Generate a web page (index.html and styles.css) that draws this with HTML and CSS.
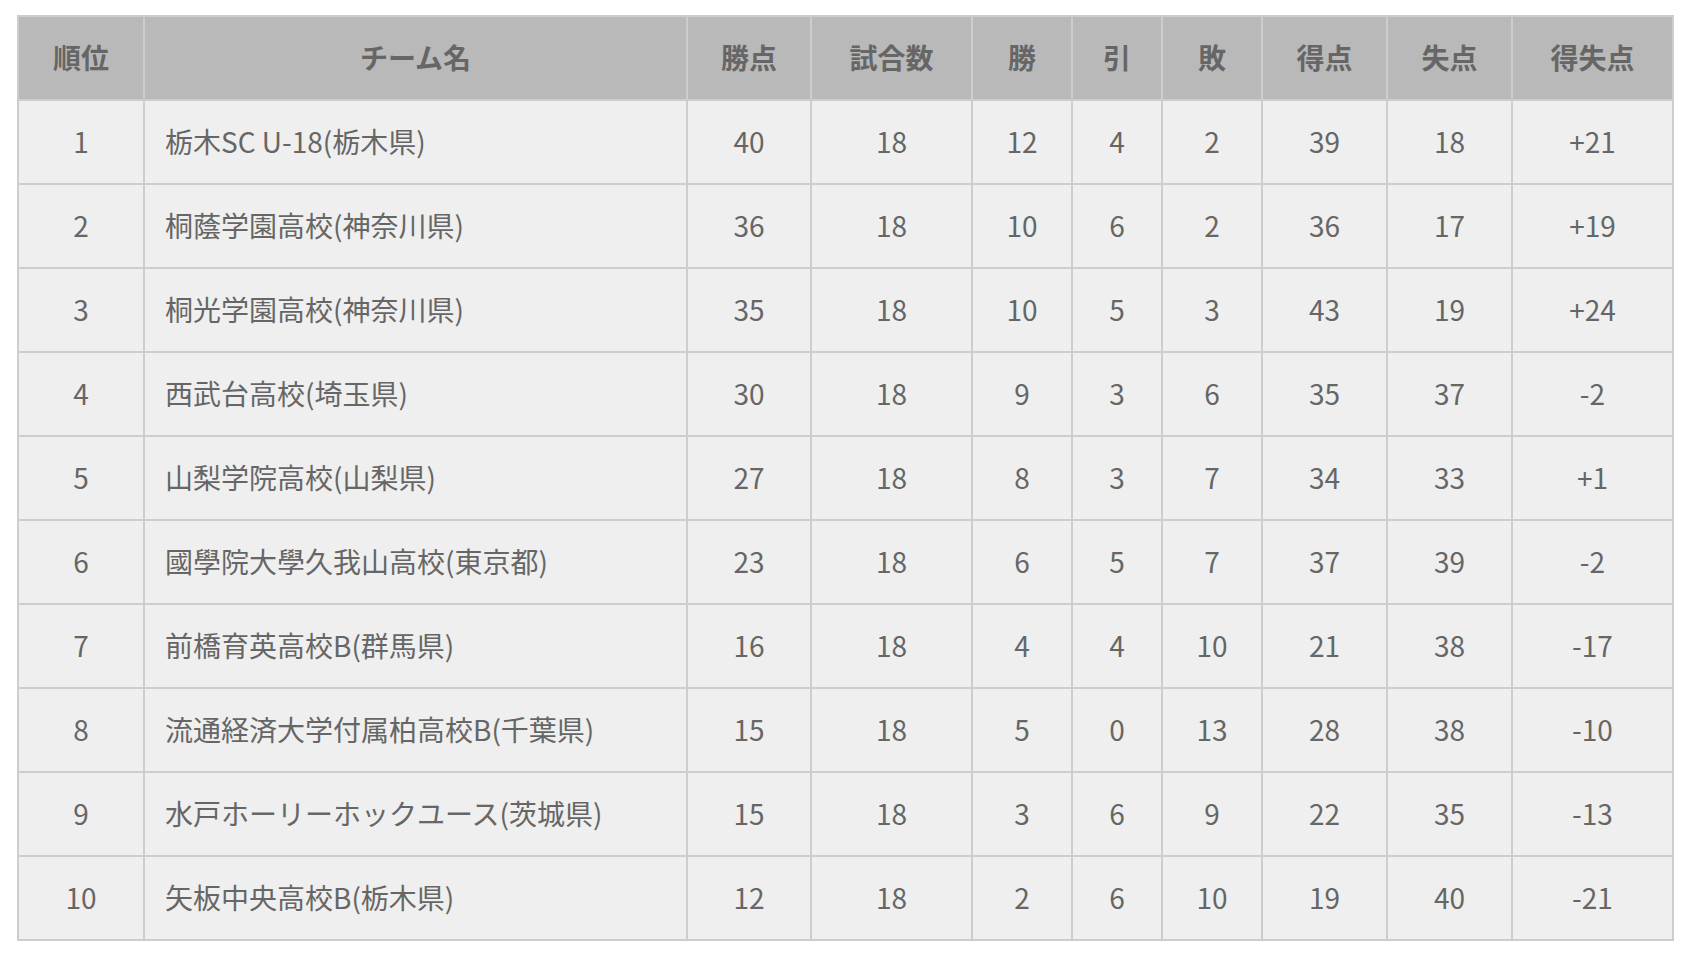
FILE: index.html
```html
<!DOCTYPE html>
<html lang="ja">
<head>
<meta charset="utf-8">
<link rel="stylesheet" href="styles.css">
</head>
<body>
<table class="standings">
  <colgroup>
    <col class="c-rank"><col class="c-team"><col class="c-pts"><col class="c-games"><col class="c-w"><col class="c-d"><col class="c-l"><col class="c-gf"><col class="c-ga"><col class="c-gd">
  </colgroup>
  <thead>
    <tr><th>順位</th><th>チーム名</th><th>勝点</th><th>試合数</th><th>勝</th><th>引</th><th>敗</th><th>得点</th><th>失点</th><th>得失点</th></tr>
  </thead>
  <tbody>
    <tr><td>1</td><td class="team">栃木SC U-18(栃木県)</td><td>40</td><td>18</td><td>12</td><td>4</td><td>2</td><td>39</td><td>18</td><td>+21</td></tr>
    <tr><td>2</td><td class="team">桐蔭学園高校(神奈川県)</td><td>36</td><td>18</td><td>10</td><td>6</td><td>2</td><td>36</td><td>17</td><td>+19</td></tr>
    <tr><td>3</td><td class="team">桐光学園高校(神奈川県)</td><td>35</td><td>18</td><td>10</td><td>5</td><td>3</td><td>43</td><td>19</td><td>+24</td></tr>
    <tr><td>4</td><td class="team">西武台高校(埼玉県)</td><td>30</td><td>18</td><td>9</td><td>3</td><td>6</td><td>35</td><td>37</td><td>-2</td></tr>
    <tr><td>5</td><td class="team">山梨学院高校(山梨県)</td><td>27</td><td>18</td><td>8</td><td>3</td><td>7</td><td>34</td><td>33</td><td>+1</td></tr>
    <tr><td>6</td><td class="team">國學院大學久我山高校(東京都)</td><td>23</td><td>18</td><td>6</td><td>5</td><td>7</td><td>37</td><td>39</td><td>-2</td></tr>
    <tr><td>7</td><td class="team">前橋育英高校B(群馬県)</td><td>16</td><td>18</td><td>4</td><td>4</td><td>10</td><td>21</td><td>38</td><td>-17</td></tr>
    <tr><td>8</td><td class="team">流通経済大学付属柏高校B(千葉県)</td><td>15</td><td>18</td><td>5</td><td>0</td><td>13</td><td>28</td><td>38</td><td>-10</td></tr>
    <tr><td>9</td><td class="team">水戸ホーリーホックユース(茨城県)</td><td>15</td><td>18</td><td>3</td><td>6</td><td>9</td><td>22</td><td>35</td><td>-13</td></tr>
    <tr><td>10</td><td class="team">矢板中央高校B(栃木県)</td><td>12</td><td>18</td><td>2</td><td>6</td><td>10</td><td>19</td><td>40</td><td>-21</td></tr>
  </tbody>
</table>
</body>
</html>
```
FILE: styles.css
```css
html, body {
  background: #ffffff;
}
body {
  margin: 15px 16px 16px 17px;
  font-family: "Noto Sans CJK JP", "Noto Sans", sans-serif;
  color: #666666;
}
.standings {
  border-collapse: collapse;
  table-layout: fixed;
  width: 1657px;
  font-size: 28px;
}
.c-rank { width: 126px; }
.c-team { width: 543px; }
.c-pts { width: 124px; }
.c-games { width: 161px; }
.c-w { width: 100px; }
.c-d { width: 90px; }
.c-l { width: 100px; }
.c-gf { width: 125px; }
.c-ga { width: 125px; }
.c-gd { width: 161px; }
.standings th,
.standings td {
  border: 2px solid #cdcdcd;
  height: 82px;
  padding: 0;
  text-align: center;
  vertical-align: middle;
  line-height: 1.2;
  white-space: nowrap;
}
.standings th {
  background: #b9b9b9;
  font-weight: 700;
  color: #666666;
}
.standings td {
  background: #efefef;
  font-weight: 400;
  color: #666666;
}
.standings td.team {
  text-align: left;
  padding-left: 20px;
}
```
